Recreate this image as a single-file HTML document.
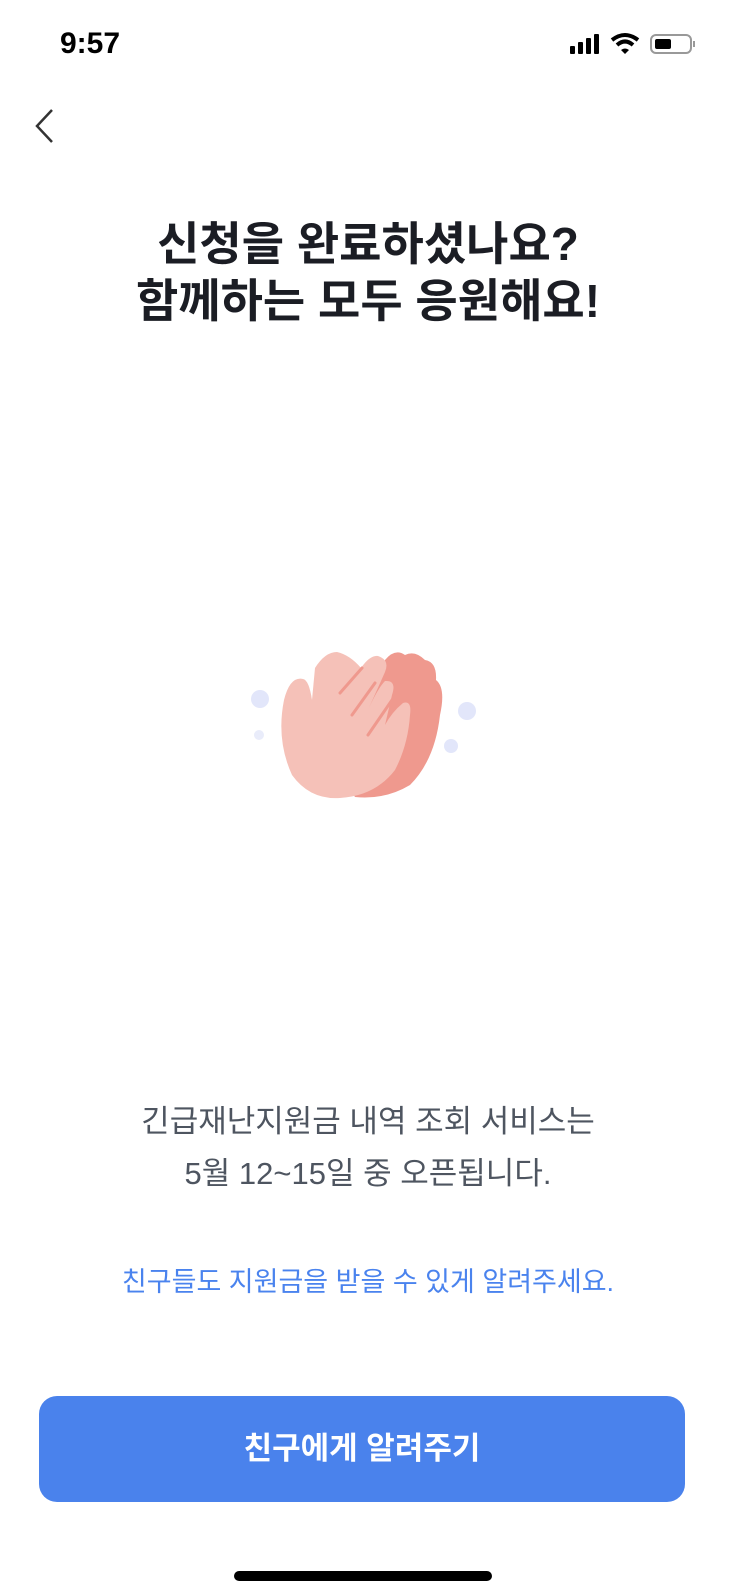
<!DOCTYPE html>
<html><head><meta charset="utf-8"><style>
body{margin:0;width:736px;height:1593px;background:#fff;position:relative;overflow:hidden;font-family:"Liberation Sans","Noto Sans CJK KR",sans-serif}
.t{position:absolute;left:0;width:736px;text-align:center}
</style></head><body>
<div style="position:absolute;left:60px;top:27px;font-size:30px;font-weight:bold;color:#000">9:57</div>
<svg style="position:absolute;left:570px;top:32px" width="140" height="26">
<rect x="0" y="14" width="5" height="8" rx="1" fill="#000"/><rect x="8" y="10" width="5" height="12" rx="1" fill="#000"/><rect x="16" y="6" width="5" height="16" rx="1" fill="#000"/><rect x="24" y="2" width="5" height="20" rx="1" fill="#000"/>
<path d="M42 8 Q55 -2 68 8" stroke="#000" stroke-width="4" fill="none"/><path d="M47 13 Q55 6 63 13" stroke="#000" stroke-width="4" fill="none"/><path d="M51 18 L55 22 L59 18 Q55 15 51 18Z" fill="#000"/>
<rect x="81" y="3" width="40" height="18" rx="5" fill="none" stroke="#999" stroke-width="2"/><rect x="85" y="7" width="16" height="10" rx="2" fill="#000"/><rect x="123" y="9" width="2" height="6" fill="#999"/>
</svg>
<svg style="position:absolute;left:30px;top:108px" width="30" height="36"><path d="M22 2 L7 18 L22 34" stroke="#333" stroke-width="2.5" fill="none"/></svg>
<div class="t" style="top:216px;font-size:46px;font-weight:bold;color:#1b1d24;line-height:57px">신청을 완료하셨나요?<br>함께하는 모두 응원해요!</div>
<svg style="position:absolute;left:0;top:0" width="736" height="900">
<circle cx="260" cy="699" r="9" fill="#e2e6fa"/><circle cx="259" cy="735" r="5" fill="#e9ecfa"/><circle cx="467" cy="711" r="9" fill="#e2e6fa"/><circle cx="451" cy="746" r="7" fill="#e2e6fa"/>
<path d="M385 660 Q395 648 405 655 Q415 650 425 660 Q437 662 436 680 Q446 688 440 715 Q435 760 410 785 Q385 800 355 797 L330 760 Z" fill="#ef998e"/>
<path d="M303 679 Q290 676 284 700 Q276 740 292 775 Q310 800 340 798 Q375 796 395 770 Q408 745 410 715 Q412 700 403 703 Q392 712 385 725 L392 695 Q397 680 385 681 Q378 688 368 710 L385 672 Q390 660 378 656 Q370 655 361 668 Q350 655 337 652 Q325 652 315 668 L312 700 Q309 680 303 679Z" fill="#f5c1b8"/>
<path d="M340 693 L362 668 M352 715 L375 683 M368 735 L392 700" stroke="#ef998e" stroke-width="3" stroke-linecap="round"/>
</svg>
<div class="t" style="top:1096px;font-size:31px;color:#4e5560;line-height:52px">긴급재난지원금 내역 조회 서비스는<br>5월 12~15일 중 오픈됩니다.</div>
<div class="t" style="top:1260px;font-size:27px;color:#4a83ee">친구들도 지원금을 받을 수 있게 알려주세요.</div>
<div style="position:absolute;left:39px;top:1396px;width:646px;height:106px;background:#4a82ec;border-radius:18px;color:#fff;font-size:31px;font-weight:bold;text-align:center;line-height:106px">친구에게 알려주기</div>
<div style="position:absolute;left:234px;top:1571px;width:258px;height:10px;background:#000;border-radius:5px"></div>
</body></html>
